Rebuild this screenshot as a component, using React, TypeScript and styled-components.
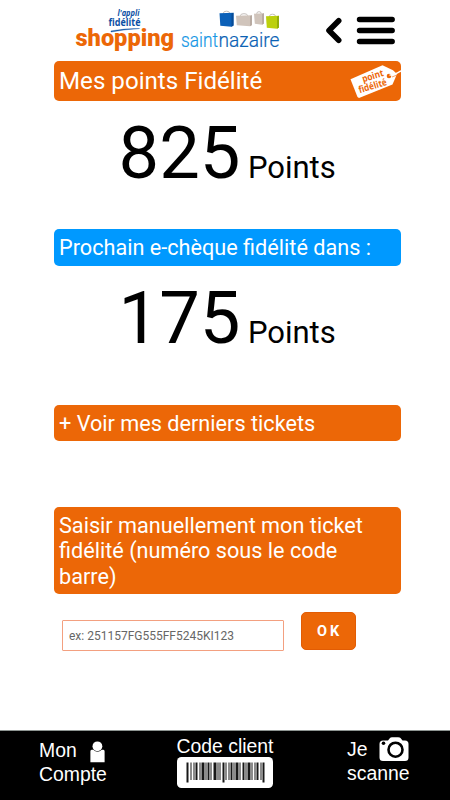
import React from 'react';
import styled, { createGlobalStyle } from 'styled-components';

const ORANGE = '#ec6707';
const BLUE = '#0099ff';

const GlobalStyle = createGlobalStyle`
  * { box-sizing: border-box; }
  body { margin: 0; background: #fff; font-family: Roboto, sans-serif; }
`;

const Screen = styled.div`
  width: 450px;
  height: 800px;
  display: flex;
  flex-direction: column;
  background: #fff;
  overflow: hidden;
`;

const Header = styled.header`
  height: 61px;
  flex: none;
  display: flex;
  align-items: flex-start;
  padding-left: 70px;
`;

const Logo = styled.svg`
  flex: none;
  display: block;
`;

const HeaderButton = styled.button<{ $gap: number }>`
  border: 0;
  padding: 0;
  background: none;
  margin: 12px 0 0 ${({ $gap }) => $gap}px;
  line-height: 0;
`;

const Main = styled.main`
  flex: 1;
  display: flex;
  flex-direction: column;
  width: 347px;
  margin-left: 54px;
`;

const Banner = styled.div<{ $color?: string; $height: number; $size: number }>`
  flex: none;
  display: flex;
  align-items: center;
  justify-content: space-between;
  height: ${({ $height }) => $height}px;
  padding: 1px 0 0 5px;
  border-radius: 5px;
  background: ${({ $color }) => $color ?? ORANGE};
  color: #fff;
  font-size: ${({ $size }) => $size}px;
  line-height: 25.5px;
`;

const Score = styled.div<{ $height: number }>`
  flex: none;
  height: ${({ $height }) => $height}px;
  padding: 11px 0 0 64.5px;
  display: flex;
  align-items: baseline;
  color: #000;
  white-space: nowrap;
`;

const Value = styled.span`
  font-size: 72.3px;
  line-height: 84px;
`;

const Unit = styled.span`
  margin-left: 7.5px;
  font-size: 31px;
`;

const Spacer = styled.div<{ $height: number }>`
  flex: none;
  height: ${({ $height }) => $height}px;
`;

const Form = styled.form`
  display: flex;
  align-items: flex-start;
  padding: 18px 0 0 8px;
`;

const TicketInput = styled.input`
  width: 222px;
  height: 31px;
  margin-top: 8px;
  padding: 0 6px;
  border: 1px solid #f3a080;
  border-radius: 1px;
  outline: 0;
  font: 12px Roboto, sans-serif;
  &::placeholder { color: #666; opacity: 1; }
`;

const Submit = styled.button`
  width: 55px;
  height: 38px;
  margin-left: 17px;
  padding: 0 0 0 2px;
  border: 1px solid #e25c04;
  border-radius: 5px;
  background: ${ORANGE};
  color: #fff;
  font: 700 14.5px Roboto, sans-serif;
  letter-spacing: 3px;
`;

const Footer = styled.footer`
  height: 70px;
  flex: none;
  display: grid;
  grid-template-columns: 137px 174px 1fr;
  background: #000;
  border-top: 1px solid #8d9491;
  color: #fff;
  font-family: 'Liberation Sans', Arial, sans-serif;
  font-size: 19.4px;
  line-height: 24px;
`;

const Tab = styled.div<{ $left: number; $top: number }>`
  padding: ${({ $top }) => $top}px 0 0 ${({ $left }) => $left}px;
  white-space: nowrap;
`;

const TabLine = styled.div<{ $gap: number; $height?: number }>`
  display: flex;
  height: ${({ $height }) => $height ?? 24}px;
  gap: ${({ $gap }) => $gap}px;
`;

const ShoppingLogo = () => (
  <Logo width="105" height="60" viewBox="0 0 105 60">
    <g fill="#0b50a4" fontFamily="Open Sans, sans-serif">
      <text x="47.5" y="15.8" fontSize="8.5" fontWeight="700" fontStyle="italic" textLength="22" lengthAdjust="spacingAndGlyphs">l'appli</text>
      <text x="38.5" y="25.5" fontSize="10.5" fontWeight="700" textLength="32" lengthAdjust="spacingAndGlyphs">fidélité</text>
    </g>
    <path d="M41 30.9Q55 28.4 69.5 28.5Q55 29.4 41 32Z" fill="#0b50a4" stroke="#0b50a4" strokeWidth=".4" />
    <text x="5.5" y="46.3" fontSize="23.5" fontWeight="900" fontFamily="Roboto, sans-serif" fill={ORANGE} textLength="98.5" lengthAdjust="spacingAndGlyphs">shopping</text>
  </Logo>
);

const bags = [
  { x: 44.5, y: 14, w: 14, h: 14, color: '#0b60b8', side: '#084b95' },
  { x: 61, y: 16.5, w: 16, h: 11, color: '#d0c4bb', side: '#b8aba2' },
  { x: 79, y: 14.5, w: 10, h: 11.5, color: '#d0c4bb', side: '#b8aba2' },
  { x: 91, y: 17, w: 13, h: 13, color: '#bcd00c', side: '#93ae08' },
];

const CityLogo = () => (
  <Logo width="110" height="60" viewBox="0 0 110 60">
    {bags.map((b) => (
      <g key={b.x}>
        <path d={`M${b.x + b.w * 0.28} ${b.y + 1}v-2q0-1.8 ${b.w * 0.22}-1.8t${b.w * 0.22} 1.8v1.6`} fill="none" stroke="#bdb7b3" strokeWidth=".9" />
        <path d={`M${b.x} ${b.y - 0.8}L${b.x + b.w} ${b.y - 1.2}V${b.y + b.h - 2.6}L${b.x + b.w - 2} ${b.y + b.h - 1.2}L${b.x + 0.8} ${b.y + b.h - 2.2}Z`} fill={b.color} />
        <path d={`M${b.x + b.w - 2} ${b.y - 0.6}L${b.x + b.w} ${b.y - 1.2}V${b.y + b.h - 2.6}L${b.x + b.w - 2} ${b.y + b.h - 1.2}Z`} fill={b.side} />
      </g>
    ))}
    <g fontFamily="Roboto, sans-serif" fontSize="20" fontWeight="300" strokeWidth=".2">
      <text x="6" y="46.5" fill="#1597e5" stroke="#1597e5" textLength="37" lengthAdjust="spacingAndGlyphs">saint</text>
      <text x="43.5" y="46.5" fill="#0b62b4" stroke="#0b62b4" textLength="61" lengthAdjust="spacingAndGlyphs">nazaire</text>
    </g>
  </Logo>
);

const PointTag = () => (
  <Logo width="53" height="39" viewBox="0 0 53 39">
    <path d="M2.5 17.2L34.5 3.3L45 8.2L49 12L44.5 22.5L11 36L9.5 35Z" fill="#fff" />
    <circle cx="41" cy="14" r="2.3" fill={ORANGE} />
    <path d="M41.5 13Q46 13.5 53 8.8" fill="none" stroke="#fff" strokeWidth="1.4" />
    <path d="M44 15Q49 13.5 51.5 11" fill="none" stroke={ORANGE} strokeWidth=".6" />
    <g transform="rotate(-17 23 22)" fill={ORANGE} fontFamily="Open Sans, sans-serif" fontWeight="700" fontSize="9.5">
      <text x="16" y="18" textLength="22" lengthAdjust="spacingAndGlyphs">point</text>
      <text x="9.5" y="27.5" textLength="29" lengthAdjust="spacingAndGlyphs">fidélité</text>
    </g>
  </Logo>
);

const BackIcon = () => (
  <svg width="18" height="36" viewBox="0 0 18 36">
    <path d="M13.7 8.7L4 18.5L13.7 28.3" fill="none" stroke="#000" strokeWidth="5.6" strokeLinecap="round" strokeLinejoin="round" />
  </svg>
);

const MenuIcon = () => (
  <svg width="40" height="36" viewBox="0 0 40 36">
    <path d="M3.5 7.5H36.2M3.5 18.5H36.2M3.5 29.5H36.2" stroke="#000" strokeWidth="5.4" strokeLinecap="round" />
  </svg>
);

const UserIcon = () => (
  <svg width="15" height="25" viewBox="0 0 15 25">
    <path d="M1.6 11.7H3.3Q7.5 15.7 11.7 11.7H13.4Q14.6 11.7 14.6 13.2V24.2H.4V13.2Q.4 11.7 1.6 11.7Z" fill="#fff" />
    <circle cx="7.4" cy="8.3" r="4.9" fill="#fff" />
  </svg>
);

const CameraIcon = () => (
  <svg width="30" height="26" viewBox="0 0 30 26">
    <path d="M4 3.5H9L11 1Q11.5.3 13 .3H19Q21 .3 21.5 1L23.5 3.5H26Q29.5 3.5 29.5 7V20.5Q29.5 24 26 24H4Q.5 24 .5 20.5V7Q.5 3.5 4 3.5Z" fill="#fff" />
    <circle cx="16.5" cy="12.7" r="7" fill="#fff" stroke="#000" strokeWidth="2.6" />
    <circle cx="4.5" cy="6.3" r="1.8" fill="#000" />
  </svg>
);

const bars = [
  [0, 2], [4, 1], [7, 1], [9, 2], [13, 1], [15, 3], [19, 1], [21, 2], [24, 1], [27, 3],
  [31, 1], [33, 1], [36, 2], [39, 1], [42, 1], [44, 2], [47, 1], [49, 3], [53, 1],
  [56, 2], [59, 1], [61, 3], [65, 1], [68, 1], [70, 2], [74, 1], [76, 2],
];

const Barcode = () => (
  <Logo width="96" height="31" viewBox="0 0 96 31">
    <rect width="96" height="31" rx="4.5" fill="#fff" />
    {bars.map(([x, w]) => (
      <rect key={x} x={x + 9.5} y="5.5" width={w} height={x === 0 || x === 36 || x === 76 ? 20 : 17.5} fill="#181818" />
    ))}
  </Logo>
);

export default function App() {
  return (
    <>
      <GlobalStyle />
      <Screen>
        <Header>
          <ShoppingLogo />
          <CityLogo />
          <HeaderButton $gap={40} aria-label="Retour"><BackIcon /></HeaderButton>
          <HeaderButton $gap={12.5} aria-label="Menu"><MenuIcon /></HeaderButton>
        </Header>
        <Main>
          <Banner $height={39.5} $size={24.15}>
            Mes points Fidélité
            <PointTag />
          </Banner>
          <Score $height={128.5}><Value>825</Value><Unit>Points</Unit></Score>
          <Banner $height={36.5} $size={21.67} $color={BLUE}>Prochain e-chèque fidélité dans :</Banner>
          <Score $height={139.5}><Value>175</Value><Unit>Points</Unit></Score>
          <Banner $height={36} $size={21.67}>+ Voir mes derniers tickets</Banner>
          <Spacer $height={66} />
          <Banner $height={87} $size={21.67}>
            Saisir manuellement mon ticket<br />fidélité (numéro sous le code<br />barre)
          </Banner>
          <Form onSubmit={(e) => e.preventDefault()}>
            <TicketInput placeholder="ex: 251157FG555FF5245KI123" />
            <Submit type="submit">OK</Submit>
          </Form>
        </Main>
        <Footer>
          <Tab $left={39} $top={7}>
            <TabLine $gap={13.5}>Mon <UserIcon /></TabLine>
            Compte
          </Tab>
          <Tab $left={39.5} $top={3}>
            <TabLine $gap={0} $height={23}>Code client</TabLine>
            <Barcode />
          </Tab>
          <Tab $left={36} $top={6}>
            <TabLine $gap={12}>Je <CameraIcon /></TabLine>
            scanne
          </Tab>
        </Footer>
      </Screen>
    </>
  );
}
